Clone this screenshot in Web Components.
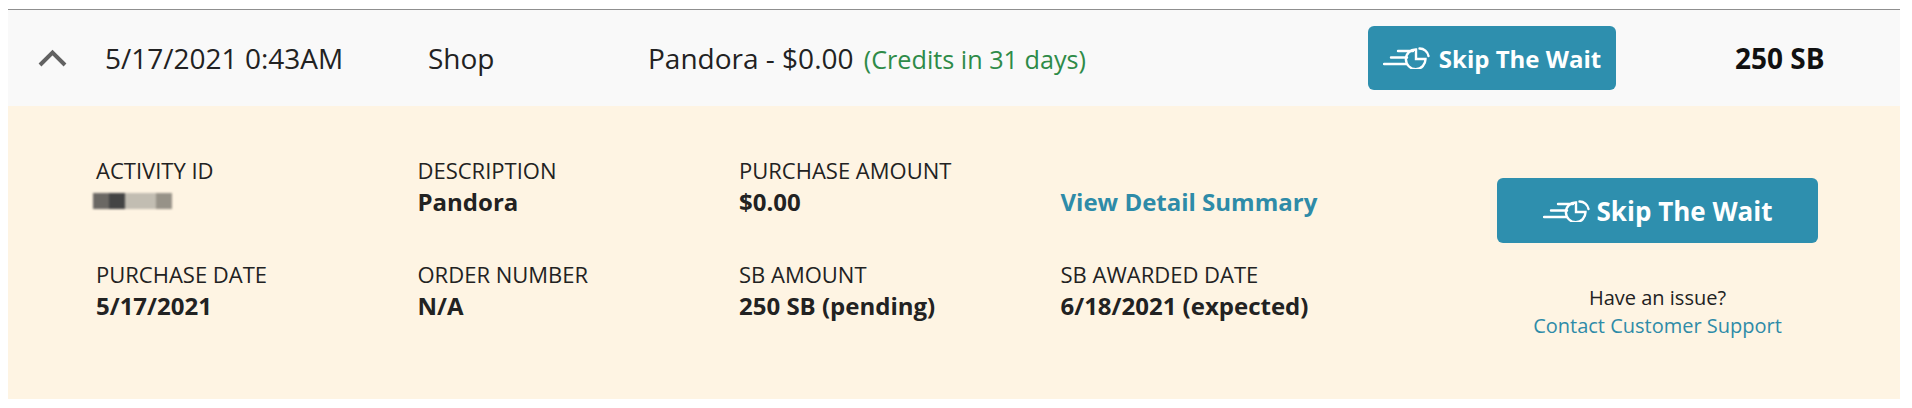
<!DOCTYPE html><html><head><meta charset="utf-8"><style>
html,body{margin:0;padding:0;background:#fff;font-family:"Open Sans",sans-serif;color:#222}
</style></head><body>
<activity-row></activity-row>
<script>
const ICON=`<svg viewBox="0 0 47 22" fill="none" stroke="#fff" stroke-width="2.400" stroke-linecap="round"><path d="M15 4H30M8 10.500H24M1 17H24"/><path d="M33 2.500A9.800 9.800 0 1 0 42.500 12H33Z"/><path d="M36.500 1.500A9 9 0 0 1 45.500 9"/></svg>`;
class SkipBtn extends HTMLElement{constructor(){super();this.attachShadow({mode:'open'}).innerHTML=`<style>:host{display:flex;align-items:center;justify-content:center;background:#2e8fae;color:#fff;font-weight:700;border-radius:6px;box-sizing:border-box}svg{display:block;width:47px;height:22px;margin-right:var(--gap)}</style>${ICON}<slot></slot>`}}
customElements.define('skip-btn',SkipBtn);
class InfoCell extends HTMLElement{constructor(){super();this.attachShadow({mode:'open'}).innerHTML=`<style>:host{display:block;line-height:31px;color:#222}.l{display:block;font-size:22px}.v{display:block;font-weight:700;font-size:24px}</style><span class="l"><slot name="l"></slot></span><span class="v"><slot name="v"></slot></span>`}}
customElements.define('info-cell',InfoCell);
class ActivityRow extends HTMLElement{constructor(){super();this.attachShadow({mode:'open'}).innerHTML=`<style>
:host{display:block;margin:9px 12px 0 8px;height:399px;border-top:1px solid #8f8f8f;font-family:"Open Sans",sans-serif}
.top{height:96px;background:#f9f9f9;display:grid;grid-template-columns:97px 323px 220px 720px 367px 1fr;align-items:center;font-size:28px;color:#222}
.chev{display:flex;padding-left:30px}
.green{color:#2e8b48;font-size:25.200px;margin-left:3px}
.amt{font-weight:700;font-size:28px;color:#111}
skip-btn.a{--gap:9px;width:248px;height:64px;font-size:24px}
skip-btn.b{--gap:7px;width:321px;height:65px;font-size:26px}
.body{height:293px;background:#fef4e3;display:grid;grid-template-columns:321.500px 321.500px 321.500px 321.500px 1fr;grid-template-rows:104px 104px;padding:49px 0 0 88px;box-sizing:border-box}
.link{color:#2e8ba8;font-weight:700;font-size:24px;align-self:start;padding-top:30px}
.side{grid-column:5;grid-row:1/3;display:flex;flex-direction:column;align-items:center;padding-top:23px;margin-left:115px;width:321px}
.issue{margin-top:41px;text-align:center;font-size:20px;line-height:28px;color:#222}
.issue a{color:#2e8ba8;display:block}
.blur{display:block;width:79px;height:16px;margin:7px 0 0 -3px;filter:blur(.8px);background:linear-gradient(90deg,#6b6864 0 20%,#444 20% 40%,#c2bdb2 40% 80%,#979288 80% 100%)}
</style>
<div class="top"><div class="chev"><svg width="29" height="18" viewBox="0 0 29 18" fill="none" stroke="#626262" stroke-width="4"><path d="M2 16L14.500 3.500L27 16"/></svg></div><div>5/17/2021 0:43AM</div><div>Shop</div><div>Pandora - $0.00 <span class="green">(Credits in 31 days)</span></div><div><skip-btn class="a">Skip The Wait</skip-btn></div><div class="amt">250 SB</div></div>
<div class="body">
<info-cell><span slot="l">ACTIVITY ID</span><span slot="v" class="blur"></span></info-cell>
<info-cell><span slot="l">DESCRIPTION</span><span slot="v">Pandora</span></info-cell>
<info-cell><span slot="l">PURCHASE AMOUNT</span><span slot="v">$0.00</span></info-cell>
<div class="link">View Detail Summary</div>
<div class="side"><skip-btn class="b">Skip The Wait</skip-btn><div class="issue">Have an issue?<a>Contact Customer Support</a></div></div>
<info-cell><span slot="l">PURCHASE DATE</span><span slot="v">5/17/2021</span></info-cell>
<info-cell><span slot="l">ORDER NUMBER</span><span slot="v">N/A</span></info-cell>
<info-cell><span slot="l">SB AMOUNT</span><span slot="v">250 SB (pending)</span></info-cell>
<info-cell><span slot="l">SB AWARDED DATE</span><span slot="v">6/18/2021 (expected)</span></info-cell>
</div>`}}
customElements.define('activity-row',ActivityRow);
</script></body></html>
